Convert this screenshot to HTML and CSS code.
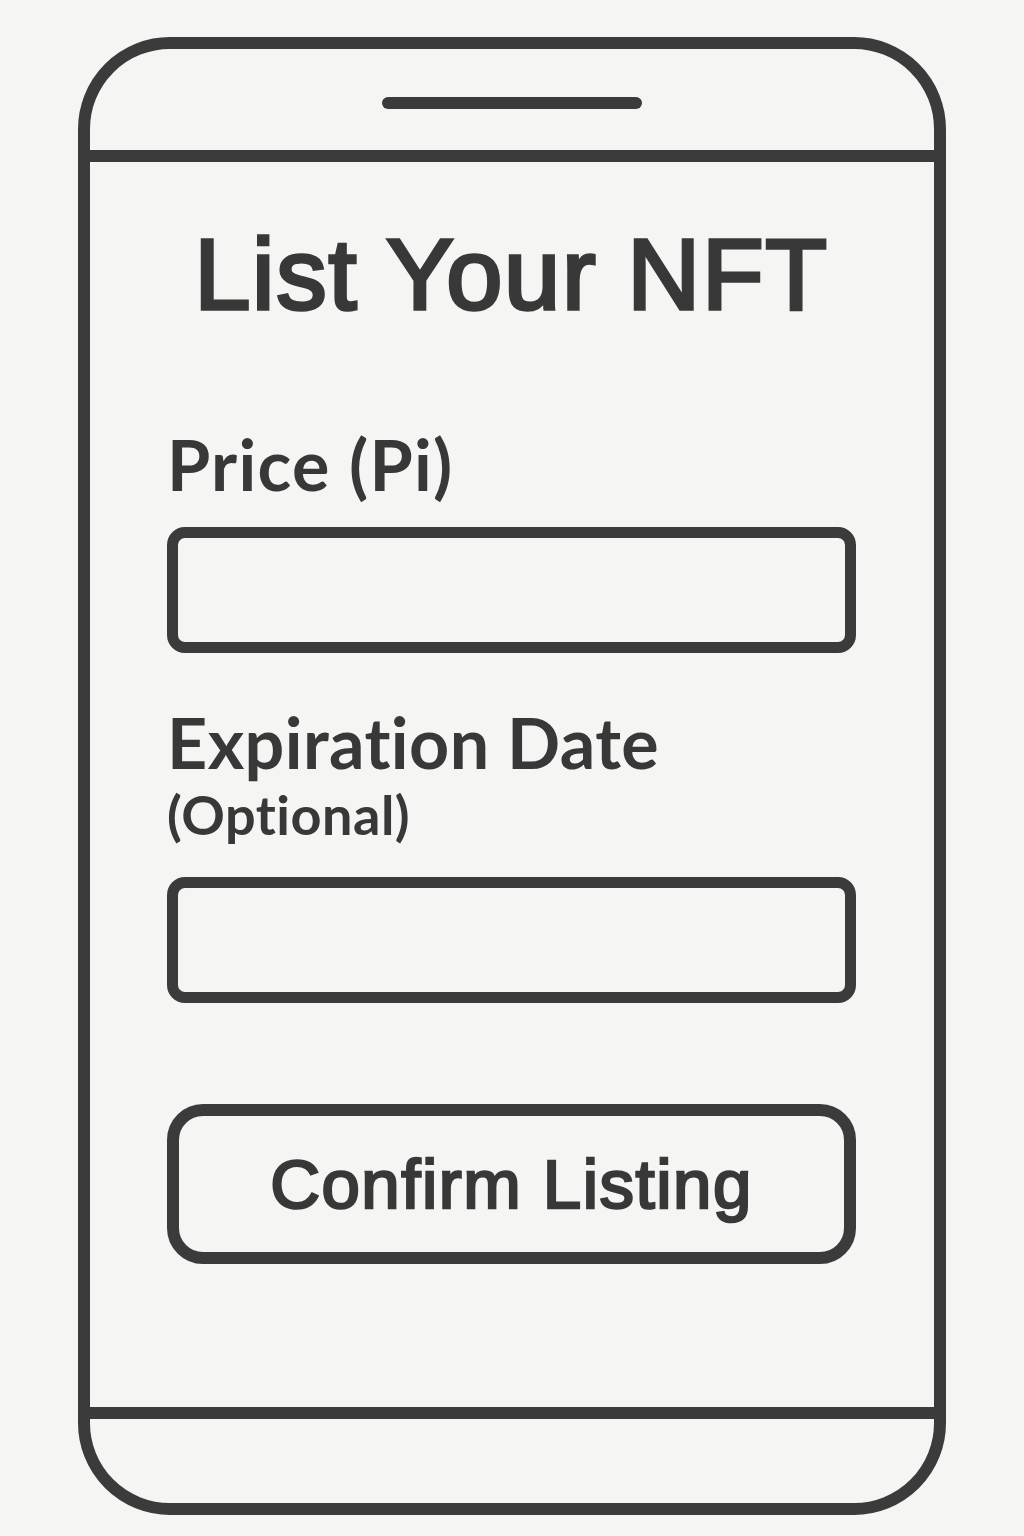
FILE: index.html
```html
<!DOCTYPE html>
<html lang="en">
<head>
<meta charset="utf-8">
<title>List Your NFT</title>
<link rel="stylesheet" href="styles.css">
</head>
<body>
<div class="phone">
  <div class="phone-top">
    <div class="speaker"></div>
  </div>
  <main class="screen">
    <h1 class="title">List Your NFT</h1>
    <label class="label label-price">Price (Pi)</label>
    <div class="field"></div>
    <label class="label label-exp">Expiration Date</label>
    <div class="sublabel">(Optional)</div>
    <div class="field field-exp"></div>
    <button class="confirm">Confirm Listing</button>
  </main>
  <div class="phone-bottom"></div>
</div>
</body>
</html>
```

FILE: styles.css
```css
html, body {
  margin: 0;
  padding: 0;
  background: #f5f5f3;
}

body {
  width: 1024px;
  height: 1536px;
  overflow: hidden;
  font-family: "Liberation Sans", Arial, sans-serif;
  color: #383838;
}

.phone {
  box-sizing: border-box;
  width: 868px;
  height: 1478px;
  margin: 37px 0 0 78px;
  border: 12px solid #3b3b3b;
  border-radius: 92px;
  display: flex;
  flex-direction: column;
}

.phone-top {
  box-sizing: border-box;
  height: 113px;
  border-bottom: 12px solid #3b3b3b;
  display: flex;
  justify-content: center;
  padding-top: 48px;
  flex: none;
}

.speaker {
  width: 260px;
  height: 12px;
  border-radius: 6px;
  background: #3b3b3b;
}

.screen {
  flex: 1;
  display: flex;
  flex-direction: column;
  padding: 60px 78px 0 77px;
}

.title {
  margin: 0;
  font-family: "Liberation Sans", Arial, sans-serif;
  font-weight: 400;
  font-size: 101px;
  line-height: 104px;
  letter-spacing: 1.75px;
  text-align: center;
  color: #383838;
  -webkit-text-stroke: 3.5px #383838;
}

.label {
  display: block;
  font-family: Lato, "Open Sans", sans-serif;
  font-weight: 700;
  font-size: 70px;
  line-height: 68px;
  letter-spacing: 0.4px;
  font-variant-ligatures: none;
  color: #383838;
}

.label-price {
  margin-top: 104px;
  letter-spacing: 1.3px;
}

.label-exp {
  margin-top: 55px;
}

.sublabel {
  font-family: Lato, "Open Sans", sans-serif;
  font-weight: 700;
  font-size: 54px;
  line-height: 53px;
  letter-spacing: 0.5px;
  font-variant-ligatures: none;
  margin-top: 12px;
  color: #383838;
}

.field {
  box-sizing: border-box;
  height: 126px;
  margin-top: 29px;
  border: 11px solid #3b3b3b;
  border-radius: 18px;
}

.field-exp {
  margin-top: 36px;
}

.confirm {
  box-sizing: border-box;
  height: 160px;
  margin-top: 101px;
  padding: 0;
  border: 12px solid #3b3b3b;
  border-radius: 36px;
  background: transparent;
  display: flex;
  align-items: center;
  justify-content: center;
  font-family: "Liberation Sans", Arial, sans-serif;
  font-weight: 400;
  font-size: 69px;
  line-height: 71px;
  letter-spacing: 1.5px;
  color: #383838;
  -webkit-text-stroke: 2.5px #383838;
}

.phone-bottom {
  box-sizing: border-box;
  height: 96px;
  border-top: 12px solid #3b3b3b;
  flex: none;
}
```
